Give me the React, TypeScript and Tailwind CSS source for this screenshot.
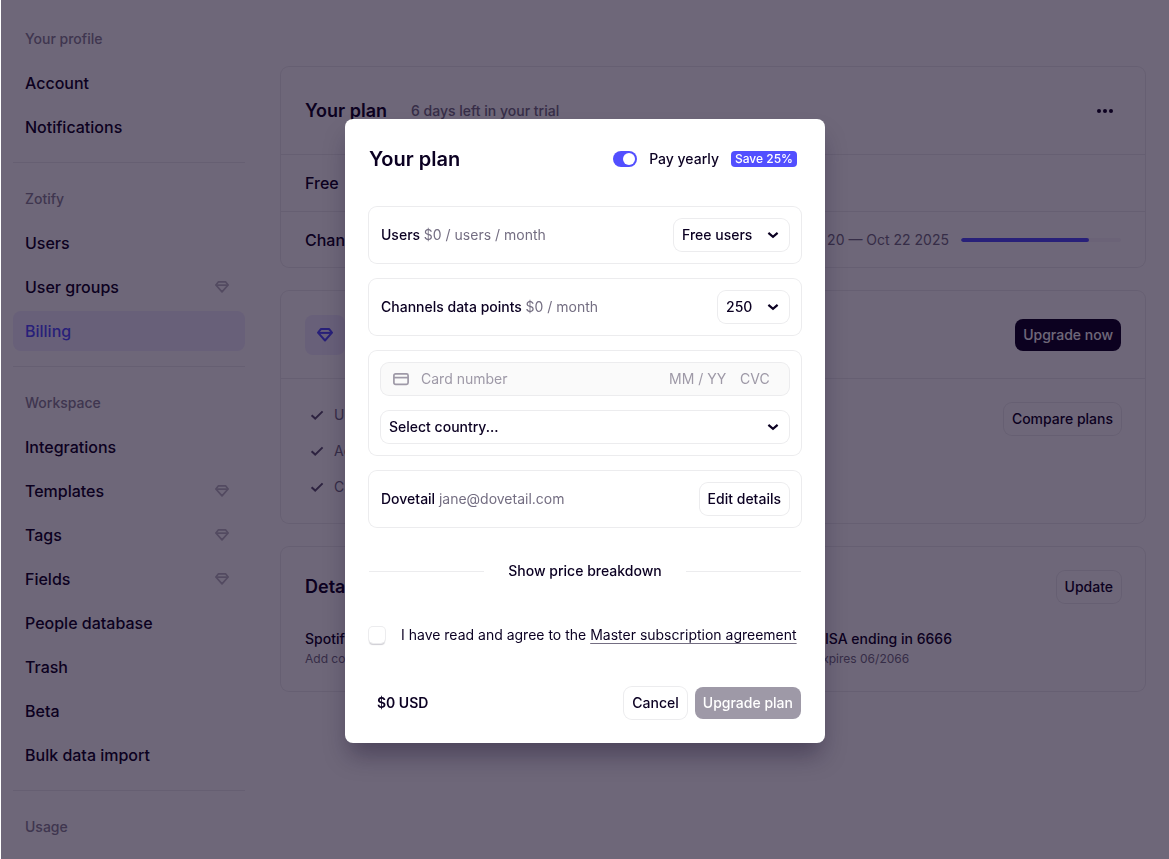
/**
 * Billing settings page with the "Your plan" upgrade dialog open on top.
 */
import { useState, type ReactNode } from "react";

interface NavItem {
  label: string;
  premium?: boolean;
  active?: boolean;
}

interface NavSection {
  title: string;
  items: NavItem[];
}

const NAV: NavSection[] = [
  { title: "Your profile", items: [{ label: "Account" }, { label: "Notifications" }] },
  {
    title: "Zotify",
    items: [
      { label: "Users" },
      { label: "User groups", premium: true },
      { label: "Billing", active: true },
    ],
  },
  {
    title: "Workspace",
    items: [
      { label: "Integrations" },
      { label: "Templates", premium: true },
      { label: "Tags", premium: true },
      { label: "Fields", premium: true },
      { label: "People database" },
      { label: "Trash" },
      { label: "Beta" },
      { label: "Bulk data import" },
    ],
  },
  { title: "Usage", items: [] },
];

const FEATURES = ["Unlimited", "Admin", "CSV"];

function Diamond({ className = "" }: { className?: string }) {
  return (
    <svg viewBox="0 0 16 16" className={className} fill="none" stroke="currentColor" strokeWidth="2" strokeLinejoin="round" aria-hidden="true">
      <path d="M4 2h8l3 3.7-7 7.8-7-7.8z" />
      <path d="M1.2 5.9h13.6" />
    </svg>
  );
}

function Check() {
  return (
    <svg viewBox="0 0 24 24" className="size-6 text-[#5c5470]" fill="none" stroke="currentColor" strokeWidth="2" aria-hidden="true">
      <path d="M6.6 12.2l3.6 3.4 7.4-7.2" />
    </svg>
  );
}

function Chevron() {
  return (
    <svg viewBox="0 0 24 24" className="pointer-events-none absolute top-1 right-1 size-6" fill="none" stroke="currentColor" strokeWidth="2.2" aria-hidden="true">
      <path d="M7.4 9.8l4.6 4 4.6-4" />
    </svg>
  );
}

function CardIcon() {
  return (
    <svg viewBox="0 0 16 16" className="size-4 shrink-0" fill="none" stroke="currentColor" strokeWidth="1.7" aria-hidden="true">
      <rect x="0.9" y="2.9" width="14.2" height="10.4" rx="1.6" />
      <path d="M1 6.6h14" />
    </svg>
  );
}

interface SelectProps {
  label: string;
  value: string;
}

function Select({ label, value }: SelectProps) {
  return (
    <div className="relative rounded-lg ring-1 ring-[#ececee]">
      <select aria-label={label} className="block h-8 w-full appearance-none rounded-lg bg-transparent pr-9 pl-2 font-medium">
        <option>{value}</option>
      </select>
      <Chevron />
    </div>
  );
}

interface ButtonProps {
  children: ReactNode;
  variant?: "outline" | "dark" | "disabled";
}

const BUTTON_STYLES = {
  outline: "ring-1 ring-[#ececee]",
  dark: "bg-[#0b0022] text-white",
  disabled: "bg-[#9e99a7] text-white",
};

function Button({ children, variant = "outline" }: ButtonProps) {
  return (
    <button
      type="button"
      disabled={variant === "disabled"}
      className={`h-8 shrink-0 rounded-lg px-2 font-medium ${BUTTON_STYLES[variant]}`}
    >
      {children}
    </button>
  );
}

function Sidebar() {
  return (
    <nav className="w-[232px] shrink-0 divide-y divide-[#ececee]">
      {NAV.map((section) => (
        <div key={section.title} className="flex flex-col gap-1 pt-4 pb-[15px] first:pt-0">
          <h2 className="flex h-10 items-center px-3 font-medium text-[#8a8496]">{section.title}</h2>
          {section.items.map((item) => (
            <a
              key={item.label}
              href="#"
              className={`flex h-10 items-center justify-between rounded-lg pr-4 pl-3 text-base font-medium ${
                item.active ? "bg-[#f0edff] text-[#524fff]" : ""
              }`}
            >
              {item.label}
              {item.premium && <Diamond className="size-3.5 text-[#bbb7c2]" />}
            </a>
          ))}
        </div>
      ))}
    </nav>
  );
}

function Panel({ children }: { children: ReactNode }) {
  return <section className="rounded-lg ring-1 ring-[#ececee]">{children}</section>;
}

function Billing() {
  return (
    <main className="flex min-w-0 flex-1 flex-col gap-6 pt-12">
      <Panel>
        <header className="flex h-[88px] items-center border-b border-[#ececee] px-6">
          <h1 className="text-lg font-semibold">Your plan</h1>
          <p className="ml-6 font-medium text-[#746e82]">6 days left in your trial</p>
          <button type="button" aria-label="More options" className="ml-auto flex size-8 items-center justify-center">
            <svg viewBox="0 0 16 4" className="h-1 w-4" fill="currentColor" aria-hidden="true">
              <circle cx="2" cy="2" r="2" />
              <circle cx="8" cy="2" r="2" />
              <circle cx="14" cy="2" r="2" />
            </svg>
          </button>
        </header>
        <div className="flex h-[57px] items-center border-b border-[#ececee] px-6 text-base font-medium">Free</div>
        <div className="flex h-[55px] items-center px-6">
          <span className="text-base font-medium">Channels</span>
          <span className="ml-auto text-[#746e82]">Sep 20 — Oct 22 2025</span>
          <div className="ml-3 h-1 w-40 overflow-hidden rounded-full bg-[#f7f5fa]">
            <div className="h-full w-4/5 rounded-full bg-[#524fff]" />
          </div>
        </div>
      </Panel>

      <Panel>
        <header className="flex h-[88px] items-center justify-between border-b border-[#ececee] px-6">
          <div className="flex size-10 items-center justify-center rounded-lg bg-[#f0edff] text-[#524fff]">
            <Diamond className="size-4" />
          </div>
          <Button variant="dark">Upgrade now</Button>
        </header>
        <div className="flex items-start justify-between p-6">
          <ul className="flex flex-col gap-3 leading-6 text-[#746e82]">
            {FEATURES.map((feature) => (
              <li key={feature} className="flex gap-[5px]">
                <Check />
                {feature}
              </li>
            ))}
          </ul>
          <Button>Compare plans</Button>
        </div>
      </Panel>

      <Panel>
        <div className="flex flex-col gap-6 p-6">
          <header className="flex items-center justify-between">
            <h2 className="text-lg font-semibold">Details</h2>
            <Button>Update</Button>
          </header>
          <div className="grid grid-cols-[5fr_3fr]">
            <div>
              <p className="leading-6 font-medium">Spotify</p>
              <p className="text-xs text-[#746e82]">Add company details</p>
            </div>
            <div>
              <p className="leading-6 font-medium">VISA ending in 6666</p>
              <p className="text-xs text-[#746e82]">Expires 06/2066</p>
            </div>
          </div>
        </div>
      </Panel>
    </main>
  );
}

function Box({ children }: { children: ReactNode }) {
  return <div className="flex items-center justify-between gap-4 rounded-lg p-3 ring-1 ring-[#ececee]">{children}</div>;
}

function PlanDialog() {
  const [yearly, setYearly] = useState(true);
  const [agreed, setAgreed] = useState(false);

  return (
    <div
      role="dialog"
      aria-modal="true"
      aria-labelledby="plan-title"
      className="w-[480px] max-w-full rounded-lg bg-white p-6 shadow-[0_16px_24px_-4px_rgba(11,0,34,0.35)]"
    >
      <header className="flex h-8 items-center pr-1">
        <h2 id="plan-title" className="text-xl font-semibold">
          Your plan
        </h2>
        <label className="ml-auto flex items-center gap-3 font-medium">
          <input type="checkbox" role="switch" checked={yearly} onChange={(e) => setYearly(e.target.checked)} className="peer sr-only" />
          <span className="flex h-4 w-6 rounded-full bg-[#9e99a7] p-0.5 peer-checked:justify-end peer-checked:bg-[#524fff]">
            <span className="size-3 rounded-full bg-white" />
          </span>
          Pay yearly
        </label>
        <span className="ml-3 rounded-sm bg-[#524fff] px-1 text-xs font-medium text-white">Save 25%</span>
      </header>

      <div className="mt-8 flex flex-col gap-4">
        <Box>
          <p className="font-medium">
            Users <span className="font-normal text-[#746e82]">$0 / users / month</span>
          </p>
          <Select label="Users" value="Free users" />
        </Box>
        <Box>
          <p className="font-medium">
            Channels data points <span className="font-normal text-[#746e82]">$0 / month</span>
          </p>
          <Select label="Channels data points" value="250" />
        </Box>
        <Box>
          <div className="flex min-w-0 flex-1 flex-col gap-4">
            <div className="flex h-8 items-center rounded-lg bg-[#fafafa] pr-4 pl-3 text-[#9e99a7] ring-1 ring-[#ececee]">
              <CardIcon />
              <input aria-label="Card number" placeholder="Card number" className="ml-3 min-w-0 flex-1 bg-transparent placeholder:text-[#9e99a7]" />
              <input aria-label="Expiry date" placeholder="MM / YY" className="w-[71px] bg-transparent placeholder:text-[#9e99a7]" />
              <input aria-label="CVC" placeholder="CVC" className="w-[33px] bg-transparent placeholder:text-[#9e99a7]" />
            </div>
            <Select label="Country" value="Select country..." />
          </div>
        </Box>
        <Box>
          <p className="font-medium">
            Dovetail <span className="font-normal text-[#746e82]">jane@dovetail.com</span>
          </p>
          <Button>Edit details</Button>
        </Box>
      </div>

      <div className="mt-8 flex h-6 items-center gap-6">
        <div className="h-px flex-1 bg-[#ececee]" />
        <button type="button" className="font-medium">
          Show price breakdown
        </button>
        <div className="h-px flex-1 bg-[#ececee]" />
      </div>

      <div className="mt-10 flex h-6 items-center gap-4">
        <input
          id="agree"
          type="checkbox"
          checked={agreed}
          onChange={(e) => setAgreed(e.target.checked)}
          className="size-4 appearance-none rounded-sm shadow-[0_2px_1px_rgba(11,0,34,0.2)] ring-1 ring-[#ececee] checked:bg-[#524fff]"
        />
        <label htmlFor="agree">
          I have read and agree to the{" "}
          <a href="#" className="underline decoration-[#746e82] underline-offset-3">
            Master subscription agreement
          </a>
        </label>
      </div>

      <footer className="mt-10 flex items-center gap-2">
        <p className="mr-auto pl-2 font-semibold">$0 USD</p>
        <Button>Cancel</Button>
        <Button variant="disabled">Upgrade plan</Button>
      </footer>
    </div>
  );
}

export default function App() {
  return (
    <div className="relative min-h-screen bg-white font-['Inter',sans-serif] text-sm leading-4 text-[#0b0022]">
      <div className="flex gap-9 pt-[19px] pr-6 pl-[13px]">
        <Sidebar />
        <Billing />
      </div>
      <div className="fixed inset-0 left-px flex items-center justify-center bg-[#0d0120]/60 pt-[3px]">
        <PlanDialog />
      </div>
    </div>
  );
}
